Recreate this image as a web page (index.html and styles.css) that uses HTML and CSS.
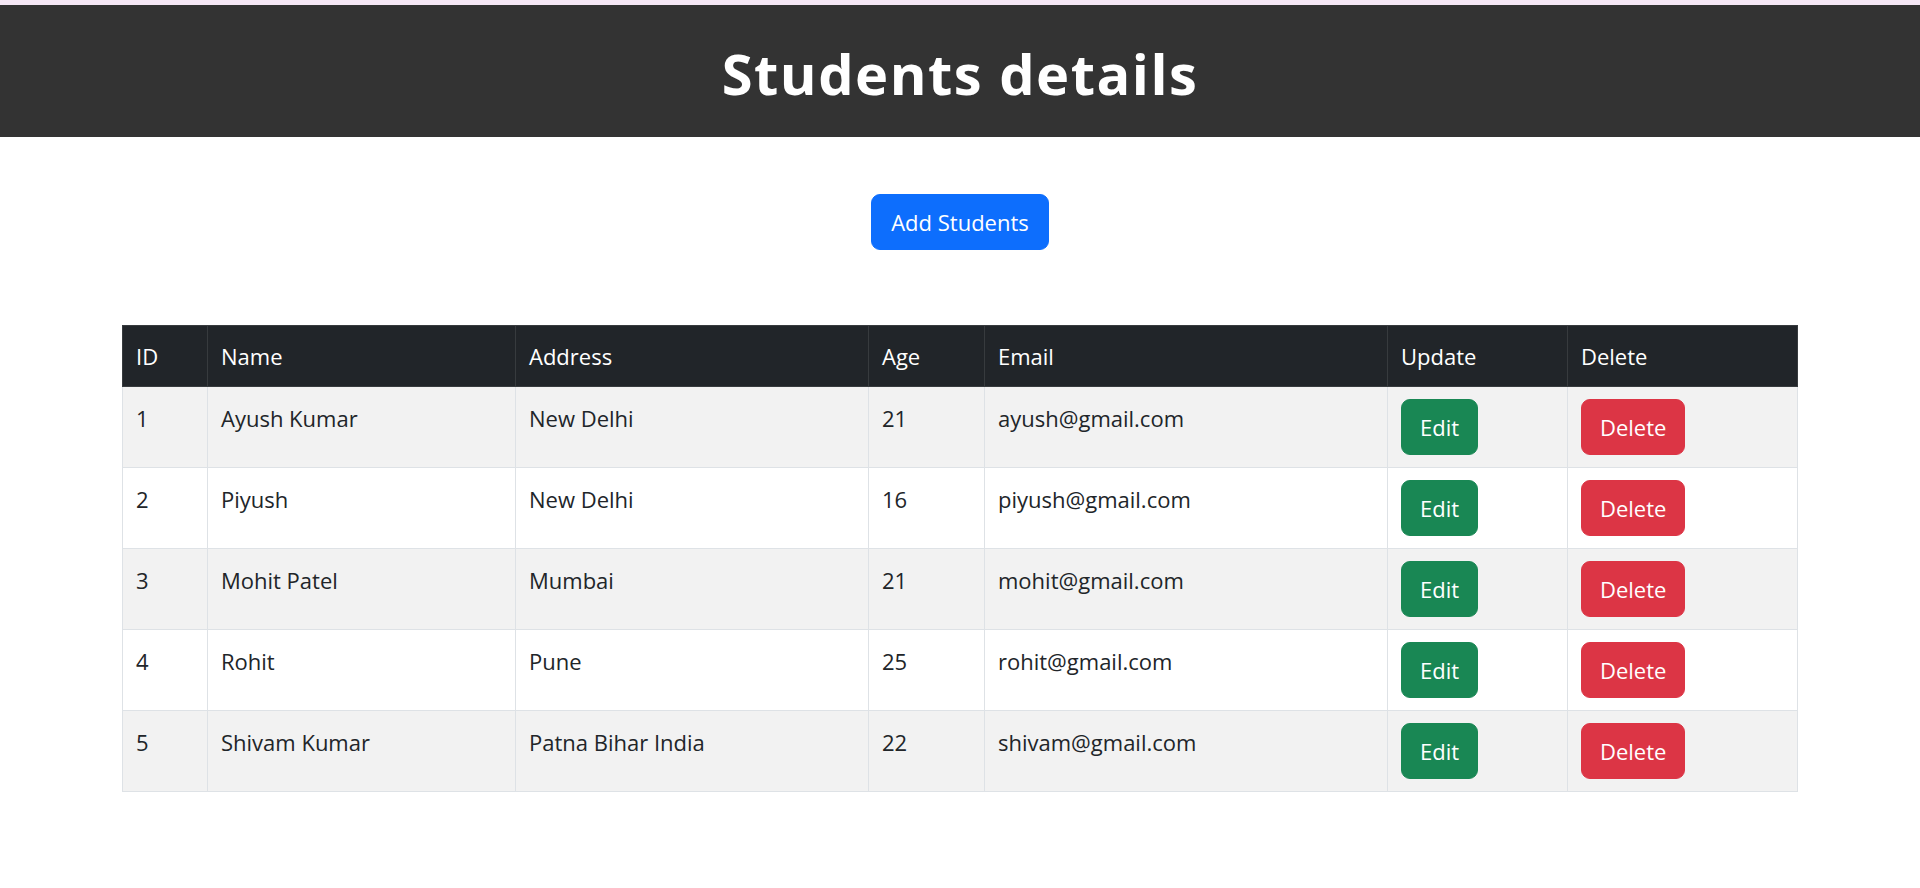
FILE: index.html
```html
<!DOCTYPE html>
<html lang="en">
<head>
<meta charset="utf-8">
<title>Students details</title>
<link rel="stylesheet" href="styles.css">
</head>
<body>
<header class="page-header">
  <h1 class="page-title">Students details</h1>
</header>
<main class="content">
  <div class="actions">
    <button class="btn btn-primary" type="button">Add Students</button>
  </div>
  <table class="students">
    <colgroup>
      <col class="c-id"><col class="c-name"><col class="c-address"><col class="c-age"><col class="c-email"><col class="c-update"><col class="c-delete">
    </colgroup>
    <thead>
      <tr><th>ID</th><th>Name</th><th>Address</th><th>Age</th><th>Email</th><th>Update</th><th>Delete</th></tr>
    </thead>
    <tbody>
      <tr><td>1</td><td>Ayush Kumar</td><td>New Delhi</td><td>21</td><td>ayush@gmail.com</td><td><button class="btn btn-success" type="button">Edit</button></td><td><button class="btn btn-danger" type="button">Delete</button></td></tr>
      <tr><td>2</td><td>Piyush</td><td>New Delhi</td><td>16</td><td>piyush@gmail.com</td><td><button class="btn btn-success" type="button">Edit</button></td><td><button class="btn btn-danger" type="button">Delete</button></td></tr>
      <tr><td>3</td><td>Mohit Patel</td><td>Mumbai</td><td>21</td><td>mohit@gmail.com</td><td><button class="btn btn-success" type="button">Edit</button></td><td><button class="btn btn-danger" type="button">Delete</button></td></tr>
      <tr><td>4</td><td>Rohit</td><td>Pune</td><td>25</td><td>rohit@gmail.com</td><td><button class="btn btn-success" type="button">Edit</button></td><td><button class="btn btn-danger" type="button">Delete</button></td></tr>
      <tr><td>5</td><td>Shivam Kumar</td><td>Patna Bihar India</td><td>22</td><td>shivam@gmail.com</td><td><button class="btn btn-success" type="button">Edit</button></td><td><button class="btn btn-danger" type="button">Delete</button></td></tr>
    </tbody>
  </table>
</main>
</body>
</html>
```

FILE: styles.css
```css
html, body {
  margin: 0;
  padding: 0;
}
body {
  font-family: "Open Sans", "Noto Sans", "Liberation Sans", sans-serif;
  font-size: 22px;
  line-height: 36px;
  color: #212529;
  background: #fff;
}
.page-header {
  border-top: 5px solid #f5e7f5;
  background: #333333;
  height: 132px;
  display: flex;
  align-items: center;
  justify-content: center;
}
.page-title {
  margin: 0;
  padding-top: 3px;
  color: #fff;
  font-size: 56px;
  font-weight: 700;
  line-height: 70px;
  letter-spacing: 1.5px;
}
.actions {
  display: flex;
  justify-content: center;
  padding-top: 57px;
}
.btn {
  font-family: inherit;
  font-size: 22px;
  line-height: 36px;
  padding: 9px 18px;
  border: 1.5px solid transparent;
  border-radius: 9px;
  color: #fff;
  cursor: pointer;
}
.btn-primary {
  background: #0d6efd;
  border-color: #0d6efd;
  padding-left: 19px;
  padding-right: 19px;
}
.btn-success { background: #198754; border-color: #198754; }
.btn-danger { background: #dc3545; border-color: #dc3545; }
.students {
  margin: 75px auto 0;
  width: 1675px;
  border-collapse: collapse;
  table-layout: fixed;
}
.c-id { width: 85px; }
.c-name { width: 308px; }
.c-address { width: 353px; }
.c-age { width: 116px; }
.c-email { width: 403px; }
.c-update { width: 180px; }
.c-delete { width: 230px; }
.students th,
.students td {
  text-align: left;
  vertical-align: top;
  padding: 12px 13px;
  border: 1px solid #dee2e6;
  font-weight: 400;
}
.students td {
  line-height: 38px;
}
.students th {
  background: #212529;
  color: #fff;
  border-color: #373b3e;
}
.students tbody tr:nth-child(odd) td {
  background: #f2f2f2;
}
```
